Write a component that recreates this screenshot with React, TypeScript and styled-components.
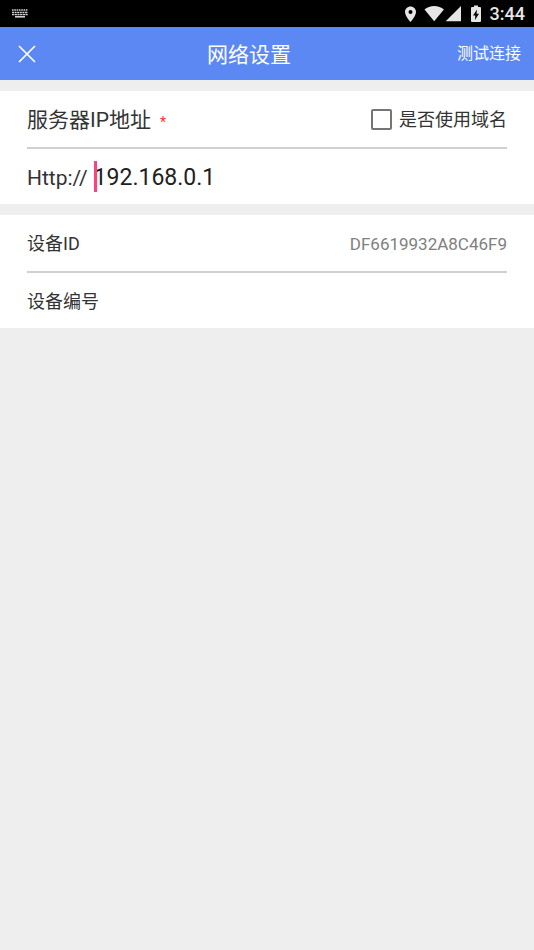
import React, { useState } from "react";
import styled, { createGlobalStyle } from "styled-components";

const GlobalStyle = createGlobalStyle`
  *, *::before, *::after { box-sizing: border-box; }
  body {
    margin: 0;
    background: #eeeeee;
    color: #333333;
    font-family: Roboto, "Noto Sans CJK SC", sans-serif;
  }
  button, input { font: inherit; color: inherit; }
`;

const Page = styled.div`
  display: flex;
  flex-direction: column;
  min-height: 100vh;
`;

const StatusBar = styled.div`
  display: flex;
  align-items: center;
  justify-content: space-between;
  height: 27px;
  padding: 0 9px 0 12px;
  background: #000000;
  color: #e6e6e6;
`;

const StatusIcons = styled.div`
  display: flex;
  align-items: center;
`;

const Clock = styled.span`
  margin-left: 9px;
  font-size: 18px;
  font-weight: 500;
  line-height: 27px;
`;

const Header = styled.header`
  display: flex;
  align-items: center;
  height: 53px;
  padding: 0 13px;
  background: #5c88f4;
  color: #ffffff;
`;

const Title = styled.h1`
  flex: 1;
  margin: 0;
  padding-top: 2px;
  font-size: 21px;
  font-weight: 400;
  line-height: 32px;
  text-align: center;
`;

const HeaderButton = styled.button<{ $icon?: boolean }>`
  display: flex;
  align-items: center;
  height: 32px;
  padding: 0 ${(p) => (p.$icon ? 4 : 0)}px;
  border: 0;
  background: none;
  font-size: 16px;
  line-height: 32px;
  white-space: nowrap;
  cursor: pointer;
`;

const Section = styled.section`
  margin-top: 11px;
  padding: 0 27px;
  background: #ffffff;
`;

const Row = styled.div<{ $divided?: boolean }>`
  display: flex;
  align-items: center;
  height: ${(p) => (p.$divided ? 58 : 55)}px;
  border-bottom: ${(p) => (p.$divided ? "2px solid #d0d0d0" : "0")};
`;

const Label = styled.label<{ $large?: boolean }>`
  flex: none;
  padding-top: 2px;
  font-size: ${(p) => (p.$large ? 21 : 18)}px;
  line-height: 32px;
`;

const Required = styled.span`
  margin-left: 9px;
  padding-top: 6px;
  color: #ff2d2d;
  font-size: 14px;
  line-height: 32px;
`;

const CheckLabel = styled.label`
  display: flex;
  align-items: center;
  gap: 7px;
  margin-left: auto;
  font-size: 18px;
  line-height: 32px;
`;

const CheckText = styled.span`
  padding-top: 2px;
`;

const Checkbox = styled.input`
  appearance: none;
  width: 21px;
  height: 21px;
  margin: 0;
  border: 2px solid #757575;
  border-radius: 2px;
  background: #ffffff;
  &:checked { background: #5c88f4; }
`;

const AddressField = styled.div`
  position: relative;
  display: flex;
  flex: 1;
  margin-left: 6px;
`;

const Caret = styled.span`
  position: absolute;
  top: 0;
  left: 0;
  width: 3px;
  height: 31px;
  background: #ff4081;
`;

const TextInput = styled.input<{ $address?: boolean }>`
  flex: 1;
  min-width: 0;
  height: 32px;
  padding: 2px 0 0;
  border: 0;
  outline: 0;
  background: none;
  color: ${(p) => (p.$address ? "#212121" : "#757575")};
  font-size: ${(p) => (p.$address ? 23 : 18)}px;
  text-align: ${(p) => (p.$address ? "left" : "right")};
  caret-color: #ff4081;
`;

const Value = styled.output`
  margin-left: auto;
  padding-top: 2px;
  color: #808080;
  font-size: 17px;
  line-height: 32px;
`;

const KeyboardIcon = () => (
  <svg width="16" height="9" viewBox="0 0 16 9" fill="none" stroke="#d0d0d0" aria-hidden="true">
    <path d="M0 1h16" strokeWidth="1.4" strokeDasharray="1.6 .7" />
    <path d="M0 3.5h16" strokeWidth="1.4" strokeDasharray="2 .6" />
    <path d="M0 5.6h16" strokeWidth="1.4" strokeDasharray="2.2 .5" />
    <path d="M3 7.8h10" strokeWidth="1.6" />
  </svg>
);

const SystemIcons = () => (
  <svg width="67" height="18" viewBox="0 0 67 18" fill="#e6e6e6" aria-hidden="true">
    <path
      fillRule="evenodd"
      d="M6.5 1.5C3.4 1.5 1 3.9 1 7c0 4 5.5 10 5.5 10S12 11 12 7c0-3.100-2.400-5.500-5.500-5.500zm0 3.500a2 2 0 1 1 0 4 2 2 0 0 1 0-4z"
    />
    <path d="M30.200 16.300 20.500 4.500C23 2.300 26.500 1 30.200 1s7.200 1.300 9.700 3.500z" />
    <path d="M57 1v15.300H41.700z" />
  </svg>
);

const BatteryIcon = () => (
  <svg width="10" height="18" viewBox="0 0 10 18" aria-hidden="true">
    <path fill="#e6e6e6" d="M3 .5h4V2h2q1 0 1 1v13q0 1-1 1H1q-1 0-1-1V3q0-1 1-1h2z" />
    <path fill="#000000" d="M6 4.500 2 10.500h2.300L4 15l4-6.300H5.600z" />
  </svg>
);

const CloseIcon = () => (
  <svg width="20" height="20" viewBox="0 0 20 20" fill="none" stroke="currentColor" strokeWidth="1.7" aria-hidden="true">
    <path d="M2 2l16 16M18 2 2 18" />
  </svg>
);

export default function App() {
  const [address, setAddress] = useState("192.168.0.1");
  const [number, setNumber] = useState("");
  const [useDomain, setUseDomain] = useState(false);

  return (
    <Page>
      <GlobalStyle />
      <StatusBar>
        <KeyboardIcon />
        <StatusIcons>
          <SystemIcons />
          <BatteryIcon />
          <Clock>3:44</Clock>
        </StatusIcons>
      </StatusBar>
      <Header>
        <HeaderButton type="button" aria-label="关闭" $icon>
          <CloseIcon />
        </HeaderButton>
        <Title>网络设置</Title>
        <HeaderButton type="button">测试连接</HeaderButton>
      </Header>
      <main>
        <Section>
          <Row $divided>
            <Label htmlFor="address" $large>服务器IP地址</Label>
            <Required>*</Required>
            <CheckLabel>
              <Checkbox
                type="checkbox"
                checked={useDomain}
                onChange={(e) => setUseDomain(e.target.checked)}
              />
              <CheckText>是否使用域名</CheckText>
            </CheckLabel>
          </Row>
          <Row>
            <Label htmlFor="address" $large>Http://</Label>
            <AddressField>
              <TextInput
                id="address"
                $address
                value={address}
                onChange={(e) => setAddress(e.target.value)}
              />
              <Caret />
            </AddressField>
          </Row>
        </Section>
        <Section>
          <Row $divided>
            <Label htmlFor="device-id">设备ID</Label>
            <Value id="device-id">DF6619932A8C46F9</Value>
          </Row>
          <Row>
            <Label htmlFor="device-number">设备编号</Label>
            <TextInput
              id="device-number"
              value={number}
              onChange={(e) => setNumber(e.target.value)}
            />
          </Row>
        </Section>
      </main>
    </Page>
  );
}
